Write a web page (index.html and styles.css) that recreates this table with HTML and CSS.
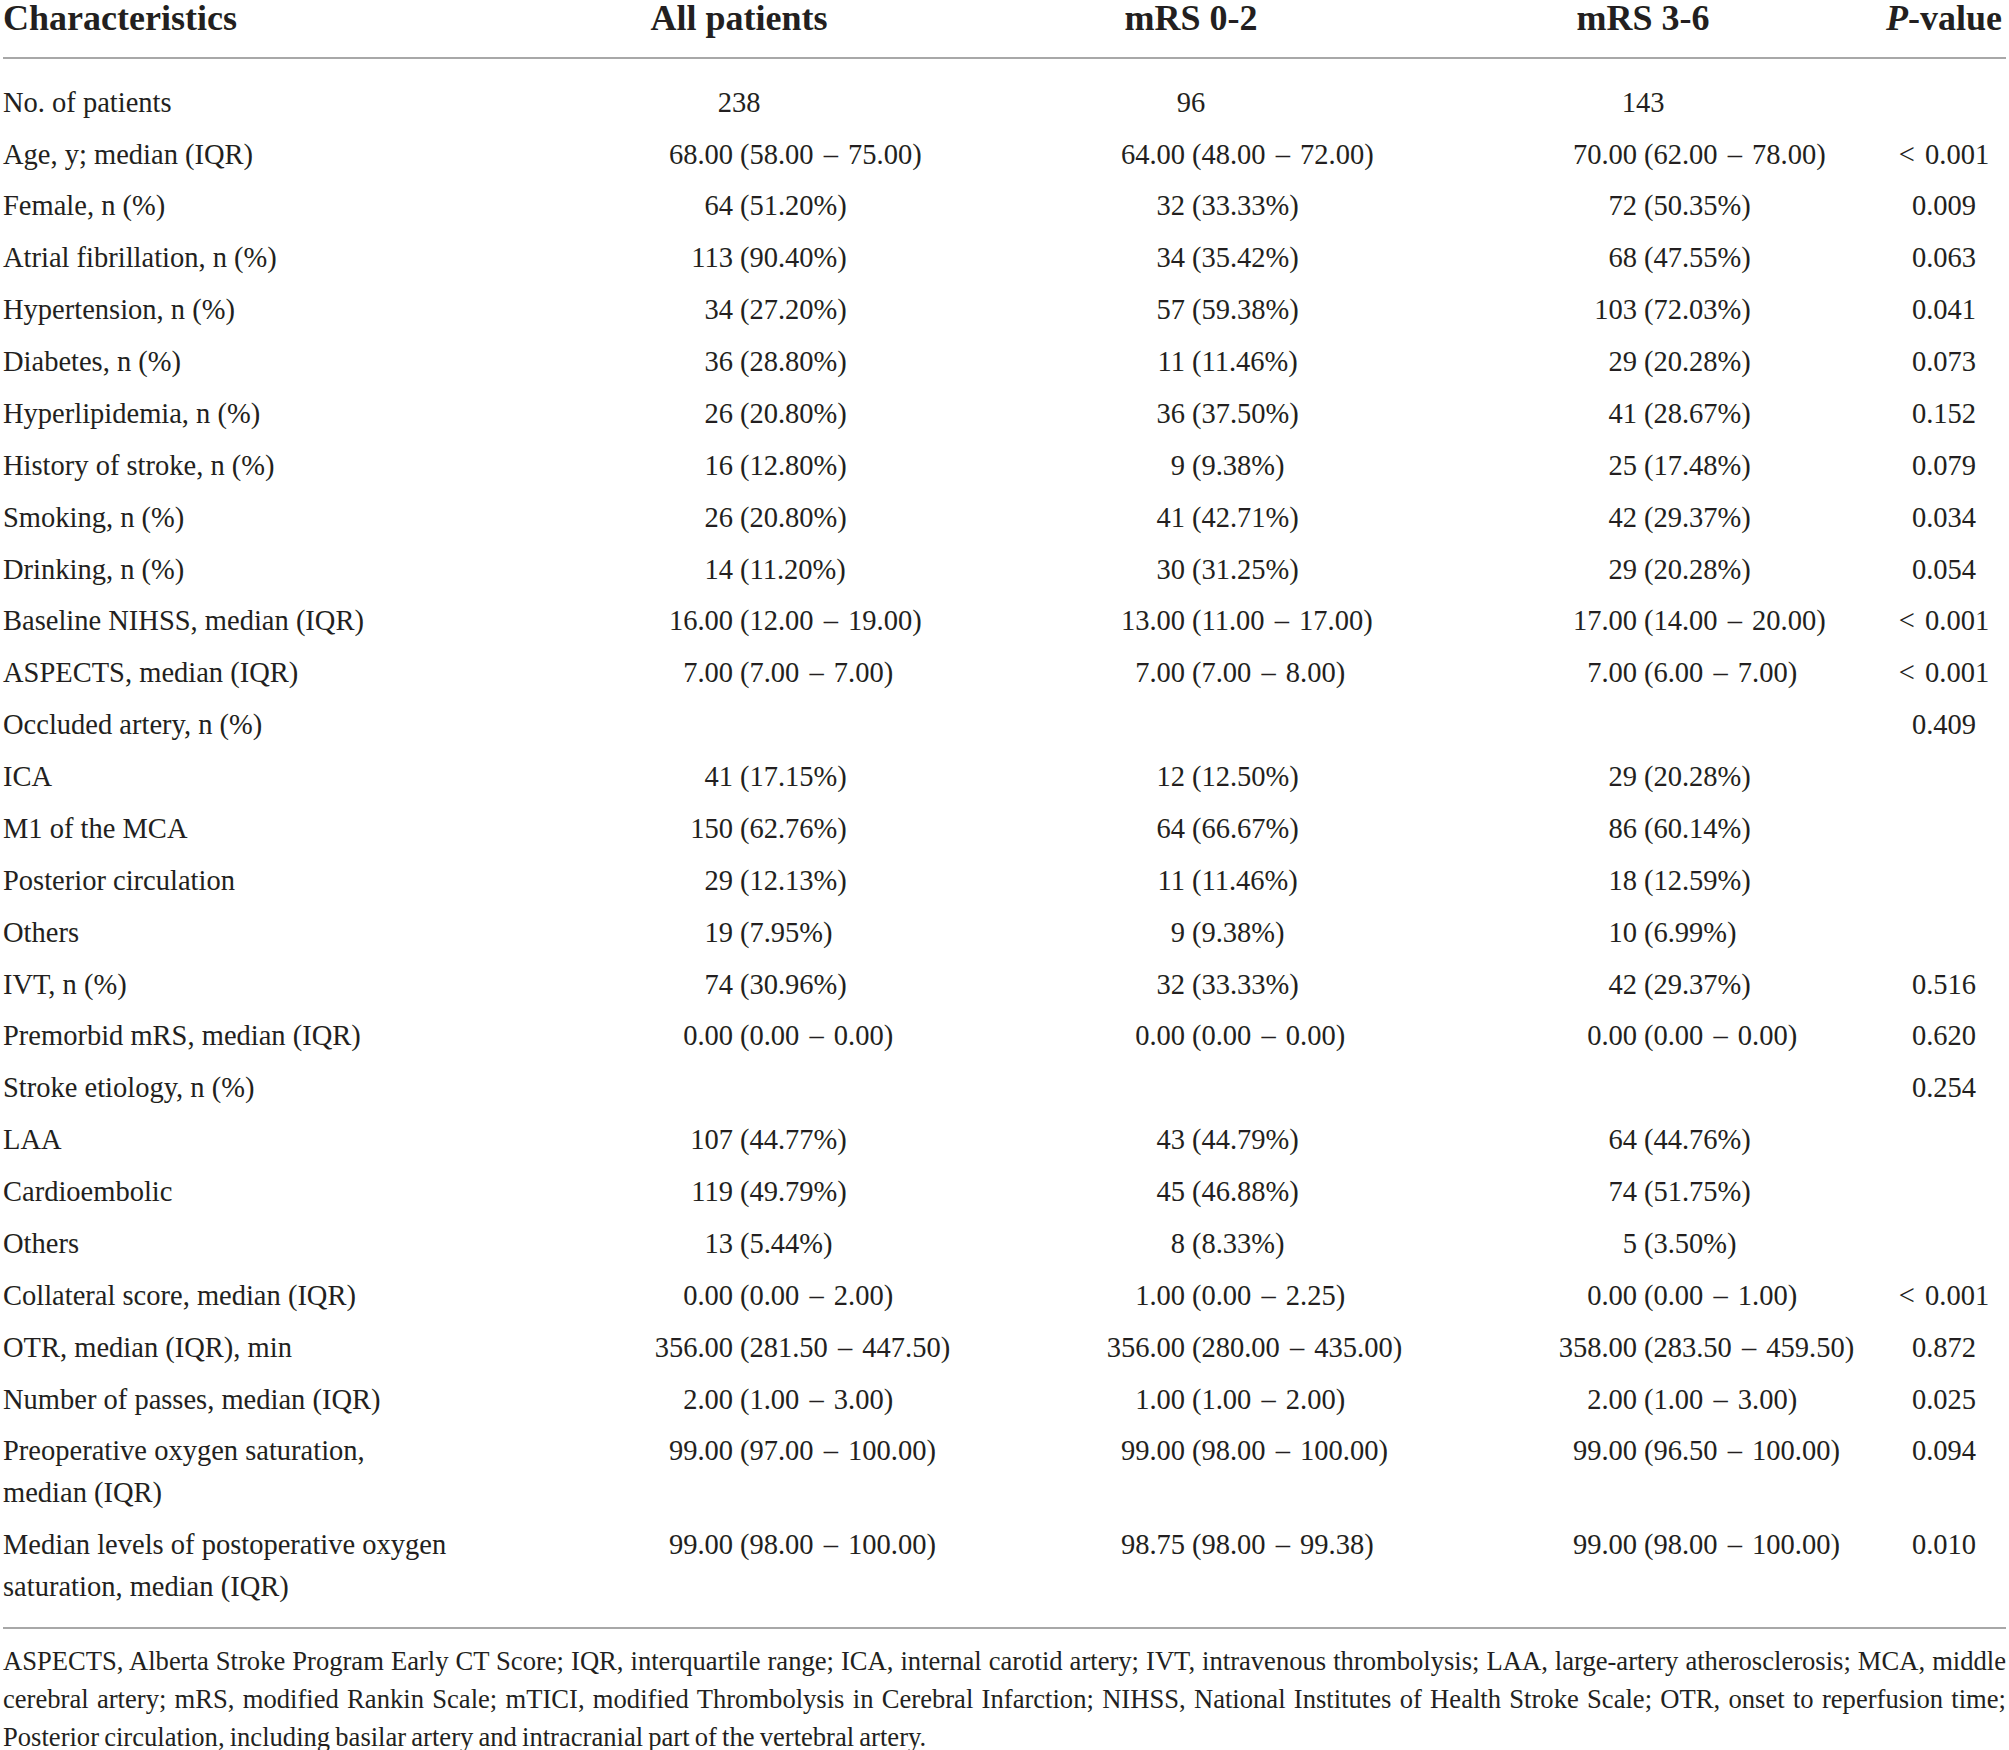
FILE: index.html
```html
<!DOCTYPE html>
<html lang="en">
<head>
    <meta charset="UTF-8">
    <title>Baseline characteristics by 90-day mRS</title>
    <link rel="stylesheet" href="styles.css">
</head>
<body>

    <div class="page">
        <table class="stats">
            <colgroup>
                <col class="c-label">
                <col class="c-val">
                <col class="c-val">
                <col class="c-val">
                <col class="c-p">
            </colgroup>
            <thead>
                <tr>
                    <th class="label">Characteristics</th>
                    <th>All patients</th>
                    <th>mRS 0-2</th>
                    <th>mRS 3-6</th>
                    <th class="p"><i>P</i>-value</th>
                </tr>
            </thead>
            <tbody>
                <tr>
                    <td>No. of patients</td>
                    <td class="solo">238</td>
                    <td class="solo">96</td>
                    <td class="solo">143</td>
                    <td class="p"></td>
                </tr>
                <tr>
                    <td>Age, y; median (IQR)</td>
                    <td><span class="n">68.00</span>(58.00 – 75.00)</td>
                    <td><span class="n">64.00</span>(48.00 – 72.00)</td>
                    <td><span class="n">70.00</span>(62.00 – 78.00)</td>
                    <td class="p">&lt; 0.001</td>
                </tr>
                <tr>
                    <td>Female, n (%)</td>
                    <td><span class="n">64</span>(51.20%)</td>
                    <td><span class="n">32</span>(33.33%)</td>
                    <td><span class="n">72</span>(50.35%)</td>
                    <td class="p">0.009</td>
                </tr>
                <tr>
                    <td>Atrial fibrillation, n (%)</td>
                    <td><span class="n">113</span>(90.40%)</td>
                    <td><span class="n">34</span>(35.42%)</td>
                    <td><span class="n">68</span>(47.55%)</td>
                    <td class="p">0.063</td>
                </tr>
                <tr>
                    <td>Hypertension, n (%)</td>
                    <td><span class="n">34</span>(27.20%)</td>
                    <td><span class="n">57</span>(59.38%)</td>
                    <td><span class="n">103</span>(72.03%)</td>
                    <td class="p">0.041</td>
                </tr>
                <tr>
                    <td>Diabetes, n (%)</td>
                    <td><span class="n">36</span>(28.80%)</td>
                    <td><span class="n">11</span>(11.46%)</td>
                    <td><span class="n">29</span>(20.28%)</td>
                    <td class="p">0.073</td>
                </tr>
                <tr>
                    <td>Hyperlipidemia, n (%)</td>
                    <td><span class="n">26</span>(20.80%)</td>
                    <td><span class="n">36</span>(37.50%)</td>
                    <td><span class="n">41</span>(28.67%)</td>
                    <td class="p">0.152</td>
                </tr>
                <tr>
                    <td>History of stroke, n (%)</td>
                    <td><span class="n">16</span>(12.80%)</td>
                    <td><span class="n">9</span>(9.38%)</td>
                    <td><span class="n">25</span>(17.48%)</td>
                    <td class="p">0.079</td>
                </tr>
                <tr>
                    <td>Smoking, n (%)</td>
                    <td><span class="n">26</span>(20.80%)</td>
                    <td><span class="n">41</span>(42.71%)</td>
                    <td><span class="n">42</span>(29.37%)</td>
                    <td class="p">0.034</td>
                </tr>
                <tr>
                    <td>Drinking, n (%)</td>
                    <td><span class="n">14</span>(11.20%)</td>
                    <td><span class="n">30</span>(31.25%)</td>
                    <td><span class="n">29</span>(20.28%)</td>
                    <td class="p">0.054</td>
                </tr>
                <tr>
                    <td>Baseline NIHSS, median (IQR)</td>
                    <td><span class="n">16.00</span>(12.00 – 19.00)</td>
                    <td><span class="n">13.00</span>(11.00 – 17.00)</td>
                    <td><span class="n">17.00</span>(14.00 – 20.00)</td>
                    <td class="p">&lt; 0.001</td>
                </tr>
                <tr>
                    <td>ASPECTS, median (IQR)</td>
                    <td><span class="n">7.00</span>(7.00 – 7.00)</td>
                    <td><span class="n">7.00</span>(7.00 – 8.00)</td>
                    <td><span class="n">7.00</span>(6.00 – 7.00)</td>
                    <td class="p">&lt; 0.001</td>
                </tr>
                <tr>
                    <td>Occluded artery, n (%)</td>
                    <td></td>
                    <td></td>
                    <td></td>
                    <td class="p">0.409</td>
                </tr>
                <tr>
                    <td>ICA</td>
                    <td><span class="n">41</span>(17.15%)</td>
                    <td><span class="n">12</span>(12.50%)</td>
                    <td><span class="n">29</span>(20.28%)</td>
                    <td class="p"></td>
                </tr>
                <tr>
                    <td>M1 of the MCA</td>
                    <td><span class="n">150</span>(62.76%)</td>
                    <td><span class="n">64</span>(66.67%)</td>
                    <td><span class="n">86</span>(60.14%)</td>
                    <td class="p"></td>
                </tr>
                <tr>
                    <td>Posterior circulation</td>
                    <td><span class="n">29</span>(12.13%)</td>
                    <td><span class="n">11</span>(11.46%)</td>
                    <td><span class="n">18</span>(12.59%)</td>
                    <td class="p"></td>
                </tr>
                <tr>
                    <td>Others</td>
                    <td><span class="n">19</span>(7.95%)</td>
                    <td><span class="n">9</span>(9.38%)</td>
                    <td><span class="n">10</span>(6.99%)</td>
                    <td class="p"></td>
                </tr>
                <tr>
                    <td>IVT, n (%)</td>
                    <td><span class="n">74</span>(30.96%)</td>
                    <td><span class="n">32</span>(33.33%)</td>
                    <td><span class="n">42</span>(29.37%)</td>
                    <td class="p">0.516</td>
                </tr>
                <tr>
                    <td>Premorbid mRS, median (IQR)</td>
                    <td><span class="n">0.00</span>(0.00 – 0.00)</td>
                    <td><span class="n">0.00</span>(0.00 – 0.00)</td>
                    <td><span class="n">0.00</span>(0.00 – 0.00)</td>
                    <td class="p">0.620</td>
                </tr>
                <tr>
                    <td>Stroke etiology, n (%)</td>
                    <td></td>
                    <td></td>
                    <td></td>
                    <td class="p">0.254</td>
                </tr>
                <tr>
                    <td>LAA</td>
                    <td><span class="n">107</span>(44.77%)</td>
                    <td><span class="n">43</span>(44.79%)</td>
                    <td><span class="n">64</span>(44.76%)</td>
                    <td class="p"></td>
                </tr>
                <tr>
                    <td>Cardioembolic</td>
                    <td><span class="n">119</span>(49.79%)</td>
                    <td><span class="n">45</span>(46.88%)</td>
                    <td><span class="n">74</span>(51.75%)</td>
                    <td class="p"></td>
                </tr>
                <tr>
                    <td>Others</td>
                    <td><span class="n">13</span>(5.44%)</td>
                    <td><span class="n">8</span>(8.33%)</td>
                    <td><span class="n">5</span>(3.50%)</td>
                    <td class="p"></td>
                </tr>
                <tr>
                    <td>Collateral score, median (IQR)</td>
                    <td><span class="n">0.00</span>(0.00 – 2.00)</td>
                    <td><span class="n">1.00</span>(0.00 – 2.25)</td>
                    <td><span class="n">0.00</span>(0.00 – 1.00)</td>
                    <td class="p">&lt; 0.001</td>
                </tr>
                <tr>
                    <td>OTR, median (IQR), min</td>
                    <td><span class="n">356.00</span>(281.50 – 447.50)</td>
                    <td><span class="n">356.00</span>(280.00 – 435.00)</td>
                    <td><span class="n">358.00</span>(283.50 – 459.50)</td>
                    <td class="p">0.872</td>
                </tr>
                <tr>
                    <td>Number of passes, median (IQR)</td>
                    <td><span class="n">2.00</span>(1.00 – 3.00)</td>
                    <td><span class="n">1.00</span>(1.00 – 2.00)</td>
                    <td><span class="n">2.00</span>(1.00 – 3.00)</td>
                    <td class="p">0.025</td>
                </tr>
                <tr>
                    <td>Preoperative oxygen saturation,<br>median (IQR)</td>
                    <td><span class="n">99.00</span>(97.00 – 100.00)</td>
                    <td><span class="n">99.00</span>(98.00 – 100.00)</td>
                    <td><span class="n">99.00</span>(96.50 – 100.00)</td>
                    <td class="p">0.094</td>
                </tr>
                <tr>
                    <td>Median levels of postoperative oxygen<br>saturation, median (IQR)</td>
                    <td><span class="n">99.00</span>(98.00 – 100.00)</td>
                    <td><span class="n">98.75</span>(98.00 – 99.38)</td>
                    <td><span class="n">99.00</span>(98.00 – 100.00)</td>
                    <td class="p">0.010</td>
                </tr>
            </tbody>
        </table>

        <p class="note">ASPECTS, Alberta Stroke Program Early CT Score; IQR, interquartile range; ICA, internal carotid artery; IVT, intravenous thrombolysis; LAA, large-artery atherosclerosis; MCA, middle cerebral artery; mRS, modified Rankin Scale; mTICI, modified Thrombolysis in Cerebral Infarction; NIHSS, National Institutes of Health Stroke Scale; OTR, onset to reperfusion time; Posterior circulation, including basilar artery and intracranial part of the vertebral artery.</p>
    </div>

</body>
</html>
```

FILE: styles.css
```css
body {
    margin: 0;
    background: #fff;
    color: #231f20;
    font-family: "Liberation Serif", "Times New Roman", serif;
}
.page {
    width: 2003px;
    padding: 0 3px;
}
.stats {
    width: 100%;
    border-collapse: collapse;
    table-layout: fixed;
    font-size: 28.5px;
}
.c-label {
    width: 510px;
}
.c-val {
    width: 452px;
}
.c-p {
    width: 137px;
}
.stats th {
    font-size: 36px;
    font-weight: bold;
    line-height: 36px;
    padding: 0 0 21px;
    text-align: center;
    white-space: nowrap;
    border-bottom: 2px solid #a8a8a8;
}
.stats th.label {
    text-align: left;
}
.stats td {
    line-height: 41.6px;
    padding: 5.15px 0;
    vertical-align: top;
    text-align: left;
    white-space: nowrap;
}
.stats td + td {
    word-spacing: 3px;
}
.stats tbody tr:first-child td {
    padding-top: 22.7px;
}
.stats tbody tr:last-child td {
    padding-bottom: 20px;
    border-bottom: 2px solid #a8a8a8;
}
.stats td.solo {
    text-align: center;
}
.stats .p {
    text-align: center;
    padding-left: 13px;
}
.n {
    display: inline-block;
    width: 227px;
    padding-right: 7px;
    box-sizing: border-box;
    text-align: right;
}
.note {
    margin: 13px 0 0;
    font-size: 26.6px;
    line-height: 38px;
    word-spacing: -1.5px;
    text-align: justify;
}
```
